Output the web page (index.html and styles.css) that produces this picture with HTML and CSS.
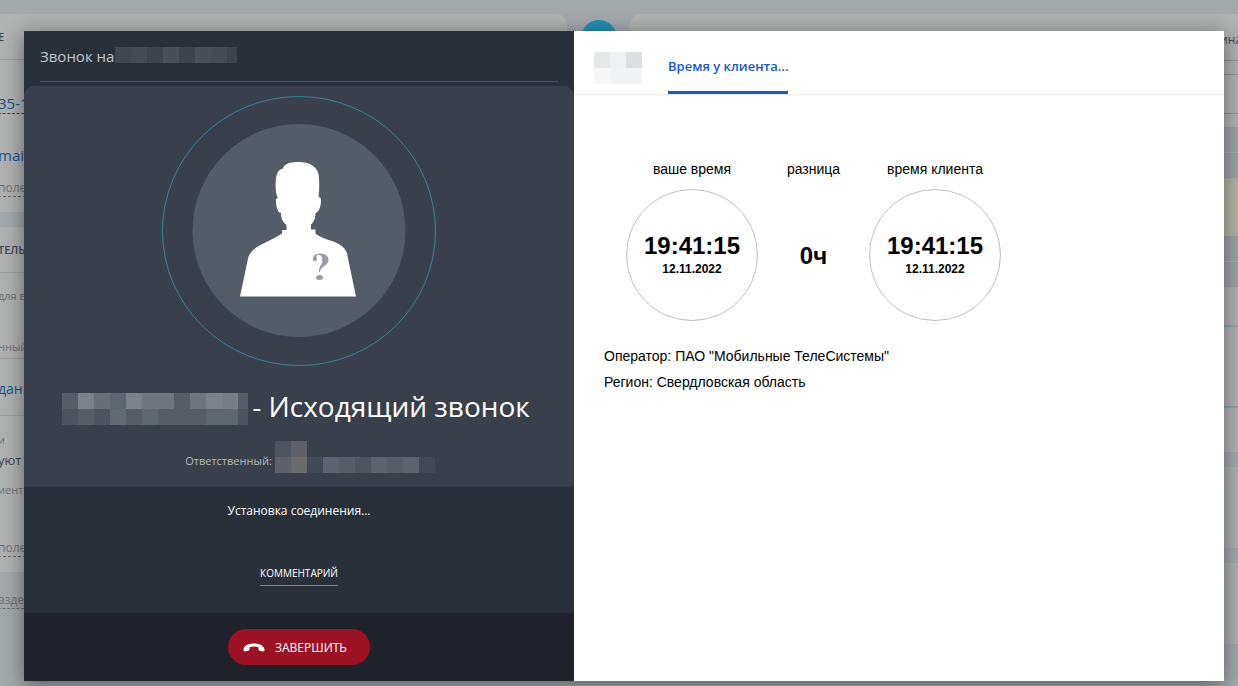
FILE: index.html
```html
<!DOCTYPE html>
<html lang="ru">
<head>
<meta charset="utf-8">
<meta name="viewport" content="width=device-width, initial-scale=1">
<title>Исходящий звонок</title>
<link rel="stylesheet" href="styles.css">
</head>
<body>
<div class="page">
  <div class="crm" aria-hidden="true">
    <div class="crm-main">
      <section class="card card-first">
        <div class="card-head">Е</div>
        <div class="row row-phone"><span class="blue dashed">35-1</span></div>
        <div class="row row-mail"><span class="blue">mail</span></div>
        <div class="row row-field"><span class="dashed">поле</span></div>
      </section>
      <section class="card card-second">
        <div class="card-head">ТЕЛЬ</div>
        <div class="row row-label">для в</div>
        <div class="row row-kind">нный</div>
        <div class="row row-deal"><span class="blue">дани</span></div>
        <div class="row row-note">и</div>
        <div class="row row-value">уют</div>
        <div class="row row-client">иент</div>
        <div class="row row-more"><span class="dashed">поле</span></div>
      </section>
      <div class="row row-section"><span class="dashed">азде</span></div>
    </div>
    <div class="crm-rail"><span class="rail-dot"></span></div>
    <div class="crm-feed">
      <section class="card feed-head">
        <div class="feed-tabs">ина</div>
        <div class="feed-gap"></div>
        <div class="feed-input"></div>
      </section>
      <div class="feed-line"></div>
      <div class="feed-line"></div>
      <div class="feed-note"></div>
      <div class="feed-line"></div>
      <div class="feed-line"></div>
      <div class="feed-list">
        <div class="feed-item item-a"></div>
        <div class="feed-item item-b"></div>
        <div class="feed-item item-c"></div>
      </div>
      <div class="feed-card"></div>
      <div class="feed-card"></div>
    </div>
  </div>

  <main class="modal">
    <section class="call">
      <header class="call-head">
        <div class="call-line">
          <span>Звонок на</span>
          <svg class="mosaic" width="122" height="16" viewBox="0 0 122 16" shape-rendering="crispEdges" aria-hidden="true">
            <rect width="122" height="16" fill="#414751"/>
            <path fill="#454b55" d="M16 0h16v16H16zM96 0h16v16H96z"/>
            <path fill="#3d444e" d="M32 0h16v16H32zM64 0h16v16H64zM112 0h10v16h-10z"/>
            <path fill="#494f59" d="M48 0h16v16H48zM80 0h16v16H80z"/>
          </svg>
        </div>
      </header>
      <div class="call-person">
        <svg class="avatar" width="274" height="270" viewBox="0 0 274 270" aria-hidden="true">
          <ellipse cx="137" cy="135" rx="136.500" ry="134.500" fill="none" stroke="#34839b"/>
          <circle cx="137" cy="134.500" r="106.500" fill="#535c67"/>
          <path fill="#fff" d="M78 200.500l8-38c1-5 5-9 10-12 6-4 17-8 24-13v-3.500h4.500v-5c-4-3-5.500-7-5.500-12-4 0-5.500-10-5-14l2-1c-3-4-3-18-1-24 1-3 3-5 6-5.500 1-4.500 7-6.500 15-6.500 14 0 21 6 21 17 .5 6 .3 12-.5 18 2 0 2.500 1 2.500 3 0 6-2 12-5.500 13-.3 6-1.500 9-4.500 11.500v5h4.500v4c7 6 16 6 24 11 4 2.500 7 6 7.500 9l9 43z"/>
          <g fill="#969ca5">
            <path d="M151 163c0-4 3.500-5.500 7.500-5.500 5 0 8 2.500 8 6.500 0 6-8 6-8.600 12h-.8c-.6-6 3.200-7 3.200-12 0-3-1.300-5.300-3.600-5.300-1.900 0-2.700 1.200-2.200 2.200.7 1 .7 4.500-1.800 4.500-1.100 0-1.700-1-1.700-2.400z"/>
            <ellipse cx="157.500" cy="181.500" rx="3.500" ry="2.500"/>
          </g>
        </svg>
        <h1 class="call-title">
          <svg class="mosaic" width="186" height="32" viewBox="0 0 186 32" shape-rendering="crispEdges" aria-hidden="true">
            <rect width="186" height="16" fill="#686f78"/>
            <rect y="16" width="186" height="16" fill="#565d67"/>
            <path fill="#565d67" d="M0 0h16v16H0zM112 0h16v16h-16zM176 0h10v16h-10z"/>
            <path fill="#7b8289" d="M16 0h16v16H16zM64 0h16v16H64zM144 0h16v16h-16z"/>
            <path fill="#5e6670" d="M48 0h16v16H48zM80 16h16v16H80zM144 16h32v16h-32z"/>
            <path fill="#6e757c" d="M80 0h32v16H80zM128 0h16v16h-16z"/>
            <path fill="#767d84" d="M160 0h16v16h-16z"/>
            <path fill="#626970" d="M48 16h16v16H48z"/>
            <path fill="#4e545f" d="M0 16h16v16H0zM32 16h16v16H32zM176 16h10v16h-10z"/>
          </svg>
          <span>- Исходящий звонок</span>
        </h1>
        <div class="call-owner">
          <span>Ответственный:</span>
          <svg class="mosaic" width="160" height="32" viewBox="0 0 160 32" shape-rendering="crispEdges" aria-hidden="true">
            <path fill="#4e555f" d="M0 0h16v16H0zM80 16h16v16H80z"/>
            <path fill="#5e6169" d="M16 0h16v16H16zM0 16h16v16H0z"/>
            <path fill="#6a6a6b" d="M16 16h16v16H16z"/>
            <path fill="#434954" d="M32 16h16v16H32zM144 16h16v16h-16z"/>
            <path fill="#5c636d" d="M48 16h16v16H48zM96 16h16v16H96zM128 16h16v16h-16z"/>
            <path fill="#565d67" d="M64 16h16v16H64zM112 16h16v16h-16z"/>
          </svg>
        </div>
      </div>
      <div class="call-state">
        <p class="status">Установка соединения...</p>
        <button class="comment" type="button">КОММЕНТАРИЙ</button>
      </div>
      <footer class="call-foot">
        <button class="hangup" type="button">
          <svg width="22" height="9" viewBox="0 0 22 9" aria-hidden="true"><path fill="#fff" d="M.5 6.500C1 2.500 5.500.5 11 .5s10 2 10.500 6c.1 1.500-.5 2-1.700 1.900l-3-.7c-1-.3-1.300-.9-1.300-1.700V4.300c-3-1-6-1-9 0V6c0 .8-.3 1.400-1.300 1.700l-3 .7C1 8.500.4 8 .5 6.500z"/></svg>
          <span>ЗАВЕРШИТЬ</span>
        </button>
      </footer>
    </section>

    <section class="info">
      <nav class="tabs">
        <svg class="mosaic" width="48" height="32" viewBox="0 0 48 32" shape-rendering="crispEdges" aria-hidden="true">
          <path fill="#e6e7e9" d="M0 0h16v16H0z"/>
          <path fill="#eff0f2" d="M16 0h16v16H16z"/>
          <path fill="#dddee0" d="M32 0h16v16H32z"/>
          <path fill="#f7f7f7" d="M0 16h16v16H0z"/>
          <path fill="#f2f3f4" d="M16 16h32v16H16z"/>
        </svg>
        <button class="tab" type="button">Время у клиента...</button>
      </nav>
      <div class="clocks">
        <div class="clock">
          <div class="clock-label">ваше время</div>
          <div class="dial"><strong class="time">19:41:15</strong><span class="date">12.11.2022</span></div>
        </div>
        <div class="clock diff">
          <div class="clock-label">разница</div>
          <div class="diff-value">0ч</div>
        </div>
        <div class="clock">
          <div class="clock-label">время клиента</div>
          <div class="dial"><strong class="time">19:41:15</strong><span class="date">12.11.2022</span></div>
        </div>
      </div>
      <div class="details">
        <p>Оператор: ПАО "Мобильные ТелеСистемы"</p>
        <p>Регион: Свердловская область</p>
      </div>
    </section>
  </main>
</div>
</body>
</html>
```
FILE: styles.css
```css
* { box-sizing: border-box; }

body {
  margin: 0;
  background: #a3a8aa;
  font-family: "Open Sans", "Noto Sans", sans-serif;
  color: #42464d;
}

h1, p { margin: 0; }

button {
  border: 0;
  background: none;
  padding: 0;
  font-family: inherit;
}

.mosaic { display: block; flex: none; }

.page {
  position: relative;
  min-height: 100vh;
  display: flex;
  overflow: hidden;
}

/* dimmed CRM page behind the call window */
.crm {
  position: absolute;
  inset: 0;
  display: grid;
  grid-template-columns: 567fr 63px 608fr;
  padding-top: 14px;
  overflow: hidden;
  white-space: nowrap;
}

.crm-main { margin-left: -2px; }

.card { background: #b0b1b1; }
.card-first { height: 198px; border-radius: 0 10px 0 0; margin-bottom: 15px; }
.card-second { height: 345px; }

.card-head {
  height: 46px;
  line-height: 46px;
  border-bottom: 1px solid #9fa2a5;
  font-size: 11px;
  font-weight: 600;
}

.row { font-size: 12px; line-height: 20px; color: #6c7178; }
.blue { color: #185490; }
.dashed { border-bottom: 1px dashed #686c72; }
.blue.dashed { border-color: #185490; }

.row-phone { font-size: 15px; padding-top: 33px; }
.row-mail { font-size: 15px; padding-top: 32px; }
.row-field { padding-top: 13px; }
.row-label { font-size: 11px; padding-top: 13px; }
.row-kind { font-size: 11px; padding: 31px 0 1px; border-bottom: 1px solid #9fa2a5; }
.row-deal { font-size: 14px; padding: 20px 0 16px; border-bottom: 1px solid #9fa2a5; }
.row-note { font-size: 11px; padding-top: 14px; }
.row-value { font-size: 13px; color: #42464d; }
.row-client { font-size: 11px; padding-top: 10px; }
.row-more { padding-top: 38px; }
.row-section { padding-top: 18px; }

.crm-rail { padding-top: 6px; text-align: center; }
.rail-dot {
  display: inline-block;
  width: 36px;
  height: 36px;
  border-radius: 50%;
  background: #238fb3;
}

.feed-head { height: 113px; border-radius: 10px 0 0 0; }
.feed-tabs {
  height: 47px;
  margin-right: -4px;
  line-height: 52px;
  border-bottom: 1px solid #929497;
  font-size: 12px;
  text-align: right;
}
.feed-gap { height: 14px; border-bottom: 1px solid #929497; }
.feed-input { height: 39px; border-bottom: 1px solid #929497; }
.feed-line { height: 26px; border-bottom: 1px solid #a9adaf; background: #9da2a5; }
.feed-note { height: 57px; background: #b3b3a6; }
.feed-list { background: #b0b1b1; margin-bottom: 15px; }
.feed-item { border-bottom: 2px solid #83a7b2; }
.item-a { height: 39px; }
.item-b { height: 81px; }
.item-c { height: 44px; border: 0; }
.feed-card { height: 81px; margin-bottom: 15px; background: #aeb0b0; }

/* call window */
.modal {
  position: relative;
  flex: 1;
  display: flex;
  margin: 31px 14px 5px 24px;
  background: #fff;
  box-shadow: 0 4px 20px rgba(0, 0, 0, .45);
}

.call {
  flex: 0 1 550px;
  display: flex;
  flex-direction: column;
  background: #2a303a;
  color: #fff;
}

.call-head { padding: 0 16px 4px; }
.call-line {
  display: flex;
  align-items: center;
  gap: 1px;
  height: 51px;
  border-bottom: 1px solid #51535b;
  color: #c3c5c9;
  font-size: 15px;
}
.call-line .mosaic { margin-bottom: 3px; }

.call-person {
  display: flex;
  flex-direction: column;
  align-items: center;
  height: 401px;
  padding-top: 10px;
  border-radius: 10px 10px 0 0;
  background: #3a404b;
}
.avatar { display: block; flex: none; }

.call-title {
  display: flex;
  align-items: center;
  gap: 4px;
  margin-top: 20px;
  padding-right: 6px;
  font-size: 28px;
  font-weight: 400;
  line-height: 40px;
  white-space: nowrap;
}
.call-title .mosaic { margin-top: 6px; }

.call-owner {
  display: flex;
  align-items: center;
  gap: 3px;
  margin-top: 15px;
  padding-left: 22px;
  color: #b5b8bd;
  font-size: 11px;
  line-height: 40px;
}
.call-owner .mosaic { margin-bottom: 8px; }

.call-state {
  flex: 1;
  display: flex;
  flex-direction: column;
  align-items: center;
  padding-top: 14px;
}
.status { font-size: 12px; line-height: 20px; }
.comment {
  margin-top: 42px;
  padding-bottom: 2px;
  border-bottom: 1px solid #7f838a;
  color: #fff;
  font-size: 10px;
  font-weight: 500;
  line-height: 20px;
}

.call-foot {
  display: flex;
  justify-content: center;
  padding: 16px;
  background: #1f222b;
}
.hangup {
  display: flex;
  align-items: center;
  gap: 10px;
  height: 36px;
  padding: 0 23px 0 15px;
  border-radius: 18px;
  background: #9c1123;
  color: #fff;
  font-size: 12px;
  font-weight: 500;
}

/* client time panel */
.info { flex: 1; }
.tabs {
  display: flex;
  align-items: center;
  gap: 26px;
  height: 64px;
  margin-left: 2px;
  padding-left: 18px;
  border-bottom: 1px solid #ebebeb;
}
.tabs .mosaic { margin-top: 10px; }
.tab {
  height: 63px;
  padding: 10px 0 0;
  border-bottom: 3px solid #1a57c8;
  color: #1a57c8;
  font-size: 13px;
  font-weight: 600;
}

.clocks {
  display: flex;
  gap: 22px;
  padding: 64px 0 0 52px;
  color: #000;
  font-family: "Liberation Sans", Arial, sans-serif;
}
.clock {
  display: flex;
  flex-direction: column;
  align-items: center;
  gap: 10px;
}
.clock-label { font-size: 14px; line-height: 20px; }
.diff { width: 67px; }
.dial {
  display: flex;
  flex-direction: column;
  align-items: center;
  width: 132px;
  height: 132px;
  padding-top: 42px;
  border: 1px solid #c0c0c0;
  border-radius: 50%;
  font-weight: 700;
}
.time { font-size: 24px; line-height: 28px; }
.date { font-size: 12px; line-height: 18px; }
.diff-value { font-size: 24px; font-weight: 700; line-height: 134px; }

.details {
  padding: 20px 30px;
  color: #000;
  font: 14px/26px "Liberation Sans", Arial, sans-serif;
}
```
